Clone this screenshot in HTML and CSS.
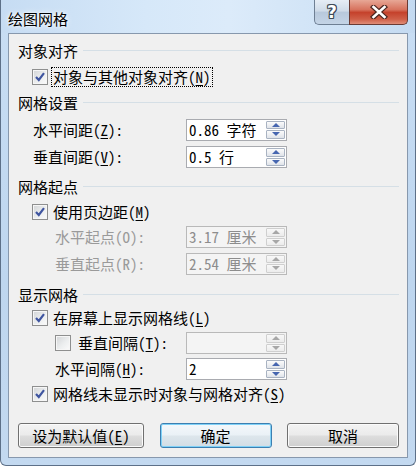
FILE: index.html
```html
<!DOCTYPE html>
<html lang="zh-CN">
<head>
<meta charset="utf-8">
<title>绘图网格</title>
<link rel="stylesheet" href="styles.css">
</head>
<body>
<div class="window">
  <div class="titlebar">
    <span class="title">绘图网格</span>
    <div class="caption-btns">
      <div class="cbtn help"><span class="q">?</span></div>
      <div class="cbtn close">
        <svg width="18" height="14" viewBox="0 0 18 14">
          <path d="M3.5 2 L14.5 12 M14.5 2 L3.5 12" stroke="#4b2620" stroke-width="5" stroke-linecap="square" fill="none"/>
          <path d="M3.5 2 L14.5 12 M14.5 2 L3.5 12" stroke="#ffffff" stroke-width="2.6" stroke-linecap="square" fill="none"/>
        </svg>
      </div>
    </div>
  </div>
  <div class="client">
    <div class="ghead h25"><span>对象对齐</span></div>
    <div class="row h27 ind1">
      <span class="box"><svg width="12" height="12" viewBox="0 0 12 12"><path d="M2 6 L4.8 9 L10 2.2" stroke="#3f55a0" stroke-width="2.2" fill="none"/></svg></span>
      <span class="lbl focus">对象与其他对象对齐(<u>N</u>)</span>
    </div>

    <div class="ghead h25"><span>网格设置</span></div>
    <div class="field h29">
      <span class="flabel ind1">水平间距(<u>Z</u>):</span>
      <div class="spin"><span class="val">0.86 字符</span><span class="arrows"><span class="ab"><i class="up"></i></span><span class="ab"><i class="dn"></i></span></span></div>
    </div>
    <div class="field h26">
      <span class="flabel ind1">垂直间距(<u>V</u>):</span>
      <div class="spin"><span class="val">0.5 行</span><span class="arrows"><span class="ab"><i class="up"></i></span><span class="ab"><i class="dn"></i></span></span></div>
    </div>

    <div class="ghead h25 mt4"><span>网格起点</span></div>
    <div class="row h25 ind1">
      <span class="box"><svg width="12" height="12" viewBox="0 0 12 12"><path d="M2 6 L4.8 9 L10 2.2" stroke="#3f55a0" stroke-width="2.2" fill="none"/></svg></span>
      <span class="lbl">使用页边距(<u>M</u>)</span>
    </div>
    <div class="field h26">
      <span class="flabel ind2 dis">水平起点(O):</span>
      <div class="spin disabled"><span class="val">3.17 厘米</span><span class="arrows"><span class="ab"><i class="up"></i></span><span class="ab"><i class="dn"></i></span></span></div>
    </div>
    <div class="field h27">
      <span class="flabel ind2 dis">垂直起点(R):</span>
      <div class="spin disabled"><span class="val">2.54 厘米</span><span class="arrows"><span class="ab"><i class="up"></i></span><span class="ab"><i class="dn"></i></span></span></div>
    </div>

    <div class="ghead h25 mt5"><span>显示网格</span></div>
    <div class="row h22 ind1">
      <span class="box"><svg width="12" height="12" viewBox="0 0 12 12"><path d="M2 6 L4.8 9 L10 2.2" stroke="#3f55a0" stroke-width="2.2" fill="none"/></svg></span>
      <span class="lbl">在屏幕上显示网格线(<u>L</u>)</span>
    </div>
    <div class="field h28">
      <span class="flabel ind2 chk"><span class="box"></span><span class="lbl wide">垂直间隔(<u>T</u>):</span></span>
      <div class="spin disabled empty"><span class="val"></span><span class="arrows"><span class="ab"><i class="up"></i></span><span class="ab"><i class="dn"></i></span></span></div>
    </div>
    <div class="field h24">
      <span class="flabel ind2">水平间隔(<u>H</u>):</span>
      <div class="spin"><span class="val">2</span><span class="arrows"><span class="ab"><i class="up"></i></span><span class="ab"><i class="dn"></i></span></span></div>
    </div>
    <div class="row h26 ind1">
      <span class="box"><svg width="12" height="12" viewBox="0 0 12 12"><path d="M2 6 L4.8 9 L10 2.2" stroke="#3f55a0" stroke-width="2.2" fill="none"/></svg></span>
      <span class="lbl">网格线未显示时对象与网格对齐(<u>S</u>)</span>
    </div>

    <div class="buttons">
      <div class="btn b1">设为默认值(<u>E</u>)</div>
      <div class="btn b2 default">确定</div>
      <div class="btn b3">取消</div>
    </div>
  </div>
</div>
</body>
</html>
```

FILE: styles.css
```css
* { box-sizing: border-box; }
html, body { margin: 0; padding: 0; }
body {
  width: 416px;
  height: 466px;
  overflow: hidden;
  background: #ffffff;
  font-family: "Noto Sans Mono CJK SC", "Noto Sans CJK SC", sans-serif;
  font-size: 15px;
  color: #000;
}
.window {
  position: relative;
  width: 416px;
  height: 466px;
  display: flex;
  flex-direction: column;
  border: 1px solid #5d7088;
  border-top: none;
  border-radius: 0 0 6px 6px;
  background: linear-gradient(180deg, #c9def4 0%, #bed6ef 60%, #c3d9f0 100%);
}
.titlebar {
  height: 33px;
  flex: none;
  display: flex;
  justify-content: space-between;
  align-items: flex-start;
  padding: 0 7px;
  background: linear-gradient(90deg, #c6dcf3 0%, #d6e8f9 35%, #dcebfa 55%, #cde1f5 85%, #c4daf1 100%);
}
.title {
  margin-top: 11px;
  line-height: 16px;
  font-size: 15px;
  text-shadow: 0 0 6px #ffffff, 0 0 3px #ffffff;
}
.caption-btns { display: flex; }
.cbtn {
  height: 25px;
  display: flex;
  align-items: center;
  justify-content: center;
}
.help {
  width: 35px;
  border: 1px solid #6e7f93;
  border-top: none;
  border-right: none;
  border-radius: 0 0 0 5px;
  background: linear-gradient(180deg, #e6edf5 0%, #cfdbe8 45%, #b8c9dc 52%, #c4d4e6 100%);
}
.q {
  font-family: "DejaVu Sans", sans-serif;
  font-weight: bold;
  font-size: 17px;
  line-height: 17px;
  color: #ffffff;
  text-shadow: 1px 0 #3f4a58, -1px 0 #3f4a58, 0 1px #3f4a58, 0 -1px #3f4a58, 1px 1px #3f4a58, -1px -1px #3f4a58, 1px -1px #3f4a58, -1px 1px #3f4a58;
}
.close {
  width: 59px;
  border: 1px solid #6a3b34;
  border-top: none;
  border-radius: 0 0 5px 0;
  background: linear-gradient(180deg, #e7a796 0%, #d7735e 40%, #c5422c 52%, #cf5f48 80%, #e08d78 100%);
}
.client {
  flex: 1;
  margin: 0 7px 7px;
  border: 1px solid #8798ad;
  background: #f0f0f0;
  padding: 4px 8px 0 9px;
  display: flex;
  flex-direction: column;
}
.h22 { height: 22px; }
.h24 { height: 24px; }
.h25 { height: 25px; }
.h26 { height: 26px; }
.h27 { height: 27px; }
.h28 { height: 28px; }
.h29 { height: 29px; }
.mt4 { margin-top: 4px; }
.mt5 { margin-top: 5px; }
.ghead {
  flex: none;
  display: flex;
  align-items: center;
  gap: 5px;
  line-height: 16px;
}
.ghead::after {
  content: "";
  flex: 1;
  height: 1px;
  background: #d5dfe6;
}
.row {
  flex: none;
  display: flex;
  align-items: center;
  line-height: 16px;
}
.ind1 { padding-left: 14px; }
.ind2 { padding-left: 37px; }
.flabel.ind1 { padding-left: 15px; }
.box {
  width: 16px;
  height: 16px;
  flex: none;
  border: 1px solid #8e8f8f;
  background: linear-gradient(135deg, #d2d4d6 0%, #eceeef 55%, #fbfbfb 100%);
  box-shadow: inset 0 0 0 1px #f6f6f6;
  display: flex;
  align-items: center;
  justify-content: center;
}
.lbl { margin-left: 4px; padding: 0 1px; }
.lbl.wide { margin-left: 6px; }
.focus {
  outline: 1px dotted #000;
  outline-offset: 0;
  line-height: 16px;
  padding: 0 1px;
  height: 18px;
  display: flex;
  align-items: center;
}
u { text-underline-offset: 2px; }
.field {
  flex: none;
  display: grid;
  grid-template-columns: 168px 101px;
  align-items: center;
  line-height: 16px;
}
.flabel { white-space: nowrap; }
.flabel.chk { display: flex; align-items: center; }
.dis { color: #9a9a9a; }
.spin {
  width: 101px;
  height: 22px;
  border: 1px solid #a9abb0;
  background: #ffffff;
  display: flex;
  align-items: center;
}
.spin .val {
  flex: 1;
  padding-left: 2px;
  white-space: nowrap;
}
.arrows {
  width: 19px;
  height: 18px;
  margin-right: 1px;
  display: flex;
  flex-direction: column;
  gap: 1px;
}
.ab {
  flex: 1;
  border: 1px solid #a9b3c2;
  border-radius: 1px;
  background: linear-gradient(180deg, #fbfbfb 0%, #eef0f3 50%, #dfe3e9 100%);
  display: flex;
  align-items: center;
  justify-content: center;
}
.ab i { width: 0; height: 0; border-left: 4px solid transparent; border-right: 4px solid transparent; }
.ab i.up { border-bottom: 4px solid #4666b0; }
.ab i.dn { border-top: 4px solid #4666b0; }
.spin.disabled { background: #f4f4f4; border-color: #b9b9b9; color: #8d8d8d; }
.spin.disabled .ab { border-color: #cfcfcf; background: linear-gradient(180deg, #f8f8f8, #ececec); }
.spin.disabled .ab i.up { border-bottom-color: #a7a7a7; }
.spin.disabled .ab i.dn { border-top-color: #a7a7a7; }
.buttons {
  margin-top: 16px;
  height: 25px;
  display: flex;
  justify-content: space-between;
}
.btn {
  height: 25px;
  border: 1px solid #707070;
  border-radius: 3px;
  background: linear-gradient(180deg, #f3f3f3 0%, #ebebeb 48%, #dddddd 52%, #cfcfcf 100%);
  box-shadow: inset 0 0 0 1px #fbfbfb;
  display: flex;
  align-items: center;
  justify-content: center;
  line-height: 16px;
}
.b1 { width: 126px; }
.b2, .b3 { width: 112px; }
.btn.default {
  border-color: #3c7fb1;
  background: linear-gradient(180deg, #f4f8fb 0%, #eaf1f6 48%, #dde6ec 52%, #d2dde5 100%);
  box-shadow: inset 0 0 0 1px #7fd1f7;
}
```
